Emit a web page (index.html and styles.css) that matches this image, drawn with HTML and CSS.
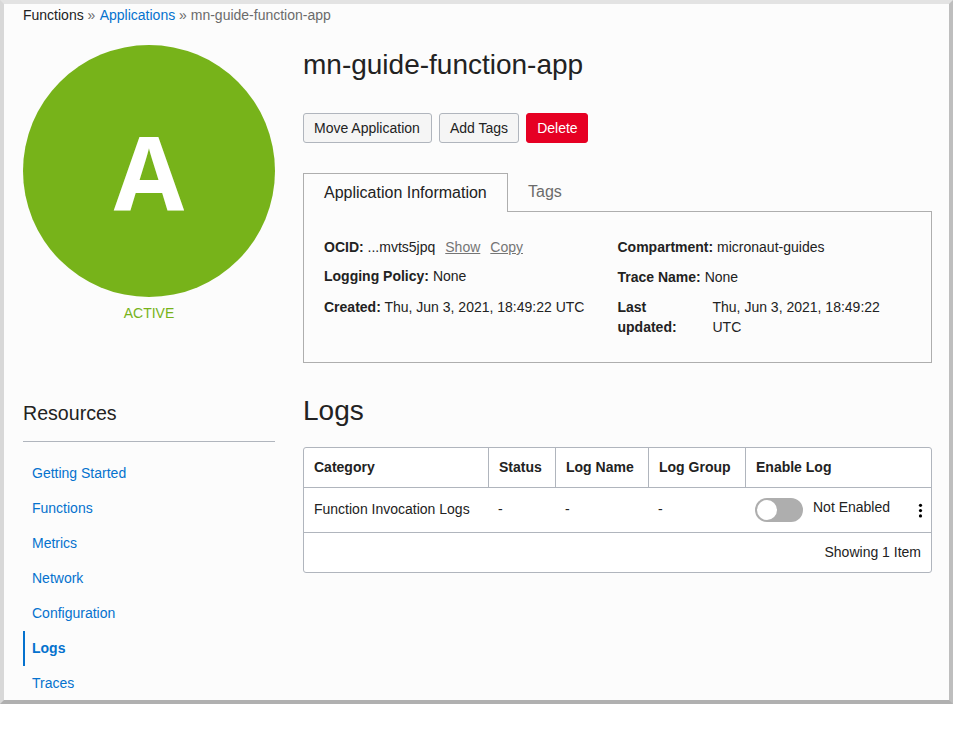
FILE: index.html
```
<!DOCTYPE html>
<html lang="en">
<head>
<meta charset="utf-8">
<title>mn-guide-function-app</title>
<link rel="stylesheet" href="styles.css">
</head>
<body>
<div class="frame">
  <nav class="breadcrumb"><span class="crumb">Functions</span> » <a href="#">Applications</a> » mn-guide-function-app</nav>
  <div class="layout">
    <aside class="sidebar">
      <div class="avatar"><span class="letter">A</span></div>
      <div class="status">ACTIVE</div>
      <h2 class="resources">Resources</h2>
      <ul class="menu">
        <li><a href="#">Getting Started</a></li>
        <li><a href="#">Functions</a></li>
        <li><a href="#">Metrics</a></li>
        <li><a href="#">Network</a></li>
        <li><a href="#">Configuration</a></li>
        <li class="current"><a href="#">Logs</a></li>
        <li><a href="#">Traces</a></li>
      </ul>
    </aside>
    <main class="main">
      <h1 class="title">mn-guide-function-app</h1>
      <div class="actions">
        <button class="btn wide">Move Application</button>
        <button class="btn">Add Tags</button>
        <button class="btn danger">Delete</button>
      </div>
      <div class="tabs">
        <div class="tab active">Application Information</div>
        <div class="tab">Tags</div>
      </div>
      <section class="panel">
        <div class="col">
          <div class="field ocid"><b>OCID:</b> ...mvts5jpq<a href="#">Show</a><a href="#">Copy</a></div>
          <div class="field policy"><b>Logging Policy:</b> None</div>
          <div class="field"><b>Created:</b> Thu, Jun 3, 2021, 18:49:22 UTC</div>
        </div>
        <div class="col">
          <div class="field"><b>Compartment:</b> micronaut-guides</div>
          <div class="field"><b>Trace Name:</b> None</div>
          <div class="field split"><b>Last updated:</b><span>Thu, Jun 3, 2021, 18:49:22 UTC</span></div>
        </div>
      </section>
      <h1 class="title logs">Logs</h1>
      <div class="table">
        <div class="row head">
          <div>Category</div><div>Status</div><div>Log Name</div><div>Log Group</div><div>Enable Log</div>
        </div>
        <div class="row data">
          <div>Function Invocation Logs</div><div>-</div><div>-</div><div>-</div>
          <div class="enable">
            <span class="toggle"><span class="knob"></span></span>
            <span class="label">Not Enabled</span>
            <svg class="dots" width="5" height="15" viewBox="0 0 5 15"><circle cx="2.5" cy="2.3" r="1.6"/><circle cx="2.5" cy="7.6" r="1.6"/><circle cx="2.5" cy="12.9" r="1.6"/></svg>
          </div>
        </div>
        <div class="foot">Showing 1 Item</div>
      </div>
    </main>
  </div>
</div>
</body>
</html>
```
FILE: styles.css
```
* { box-sizing: border-box; }
body {
  margin: 0;
  background: #fff;
  font: 14px/20px "Liberation Sans", Arial, sans-serif;
  color: #222;
}
a { color: #0572ce; text-decoration: none; }
.frame {
  height: 704px;
  overflow: hidden;
  padding: 1px 17px 0 19px;
  border: 4px solid;
  border-color: #e3e3e3 #bebebe #b0b0b0 #d8d8d8;
  background: #fcfcfc;
}
.breadcrumb { color: #6b6b6b; }
.breadcrumb a { margin-left: 0.4px; }
.crumb { color: #222; }
.layout { display: flex; gap: 28px; padding-top: 20px; }
.sidebar { width: 252px; flex: none; }
.avatar {
  height: 252px;
  border-radius: 50%;
  background: #77b31a;
  display: flex;
  align-items: center;
  justify-content: center;
}
.letter {
  font: bold 102px/138px "Open Sans", sans-serif;
  color: #fff;
}
.status { margin-top: 6px; text-align: center; color: #77b31a; }
.resources {
  margin: 76px 0 14px;
  height: 43px;
  padding-top: 2px;
  border-bottom: 1px solid #b0b5bd;
  font-size: 19.6px;
  line-height: 24px;
  font-weight: normal;
}
.menu { list-style: none; margin: 0; padding: 0; }
.menu li {
  height: 35px;
  padding-left: 7px;
  border-left: 2px solid transparent;
  line-height: 35px;
}
.menu .current { border-color: #0572ce; font-weight: bold; }
.main { width: 629px; }
.title { margin: 2px 0 0; font-size: 28px; line-height: 36px; font-weight: normal; }
.actions { display: flex; gap: 7px; margin-top: 30px; }
.btn {
  height: 30px;
  padding: 0 10px;
  border: 1px solid #b0b5bd;
  border-radius: 3px;
  background: #f5f5f5;
  font: inherit;
  color: #222;
  white-space: nowrap;
}
.wide { width: 129px; text-align: left; }
.danger { width: 62px; background: #e60023; border-color: #e60023; color: #fff; }
.tabs { display: flex; margin-top: 30px; height: 39px; font-size: 16px; color: #6b6b6b; }
.tab { padding: 9px 20px 0; height: 38px; }
.active {
  height: 39px;
  width: 205px;
  position: relative;
  white-space: nowrap;
  border: 1px solid #aeaeae;
  border-bottom: 0;
  background: #fcfcfc;
  color: #222;
}
.panel {
  display: grid;
  grid-template-columns: 293.5px 275px;
  height: 152px;
  margin-top: -1px;
  padding: 25px 20px;
  border: 1px solid #aeaeae;
}
.field { margin-bottom: 10px; white-space: nowrap; }
.ocid { margin-bottom: 9px; }
.policy { margin-bottom: 11px; }
.field a { margin-left: 10px; color: #757575; text-decoration: underline; }
.split { display: grid; grid-template-columns: 95px 180px; white-space: normal; }
.split b { width: 70px; }
.logs { margin-top: 30px; }
.table {
  margin-top: 18px;
  border: 1px solid #b0b5bd;
  border-radius: 3px;
  background: #fff;
}
.row {
  display: grid;
  grid-template-columns: 185px 67px 93px 97px 1fr;
  border-bottom: 1px solid #b0b5bd;
}
.row > div { padding: 0 10px; }
.head { height: 40px; line-height: 38px; font-weight: bold; }
.head > div:not(:last-child) { border-right: 1px solid #b0b5bd; }
.data { height: 45px; line-height: 42px; }
.data > div + div { padding-left: 9px; }
.data .enable { display: flex; align-items: center; padding-right: 8px; }
.toggle { width: 48px; height: 24px; padding: 2px; border-radius: 12px; background: #aeaeae; }
.knob { display: block; width: 20px; height: 20px; border-radius: 50%; background: #fff; }
.label { margin: -6px 0 0 10px; line-height: 20px; }
.dots { margin-left: auto; }
.foot { height: 39px; padding-right: 10px; line-height: 38px; text-align: right; }
```
